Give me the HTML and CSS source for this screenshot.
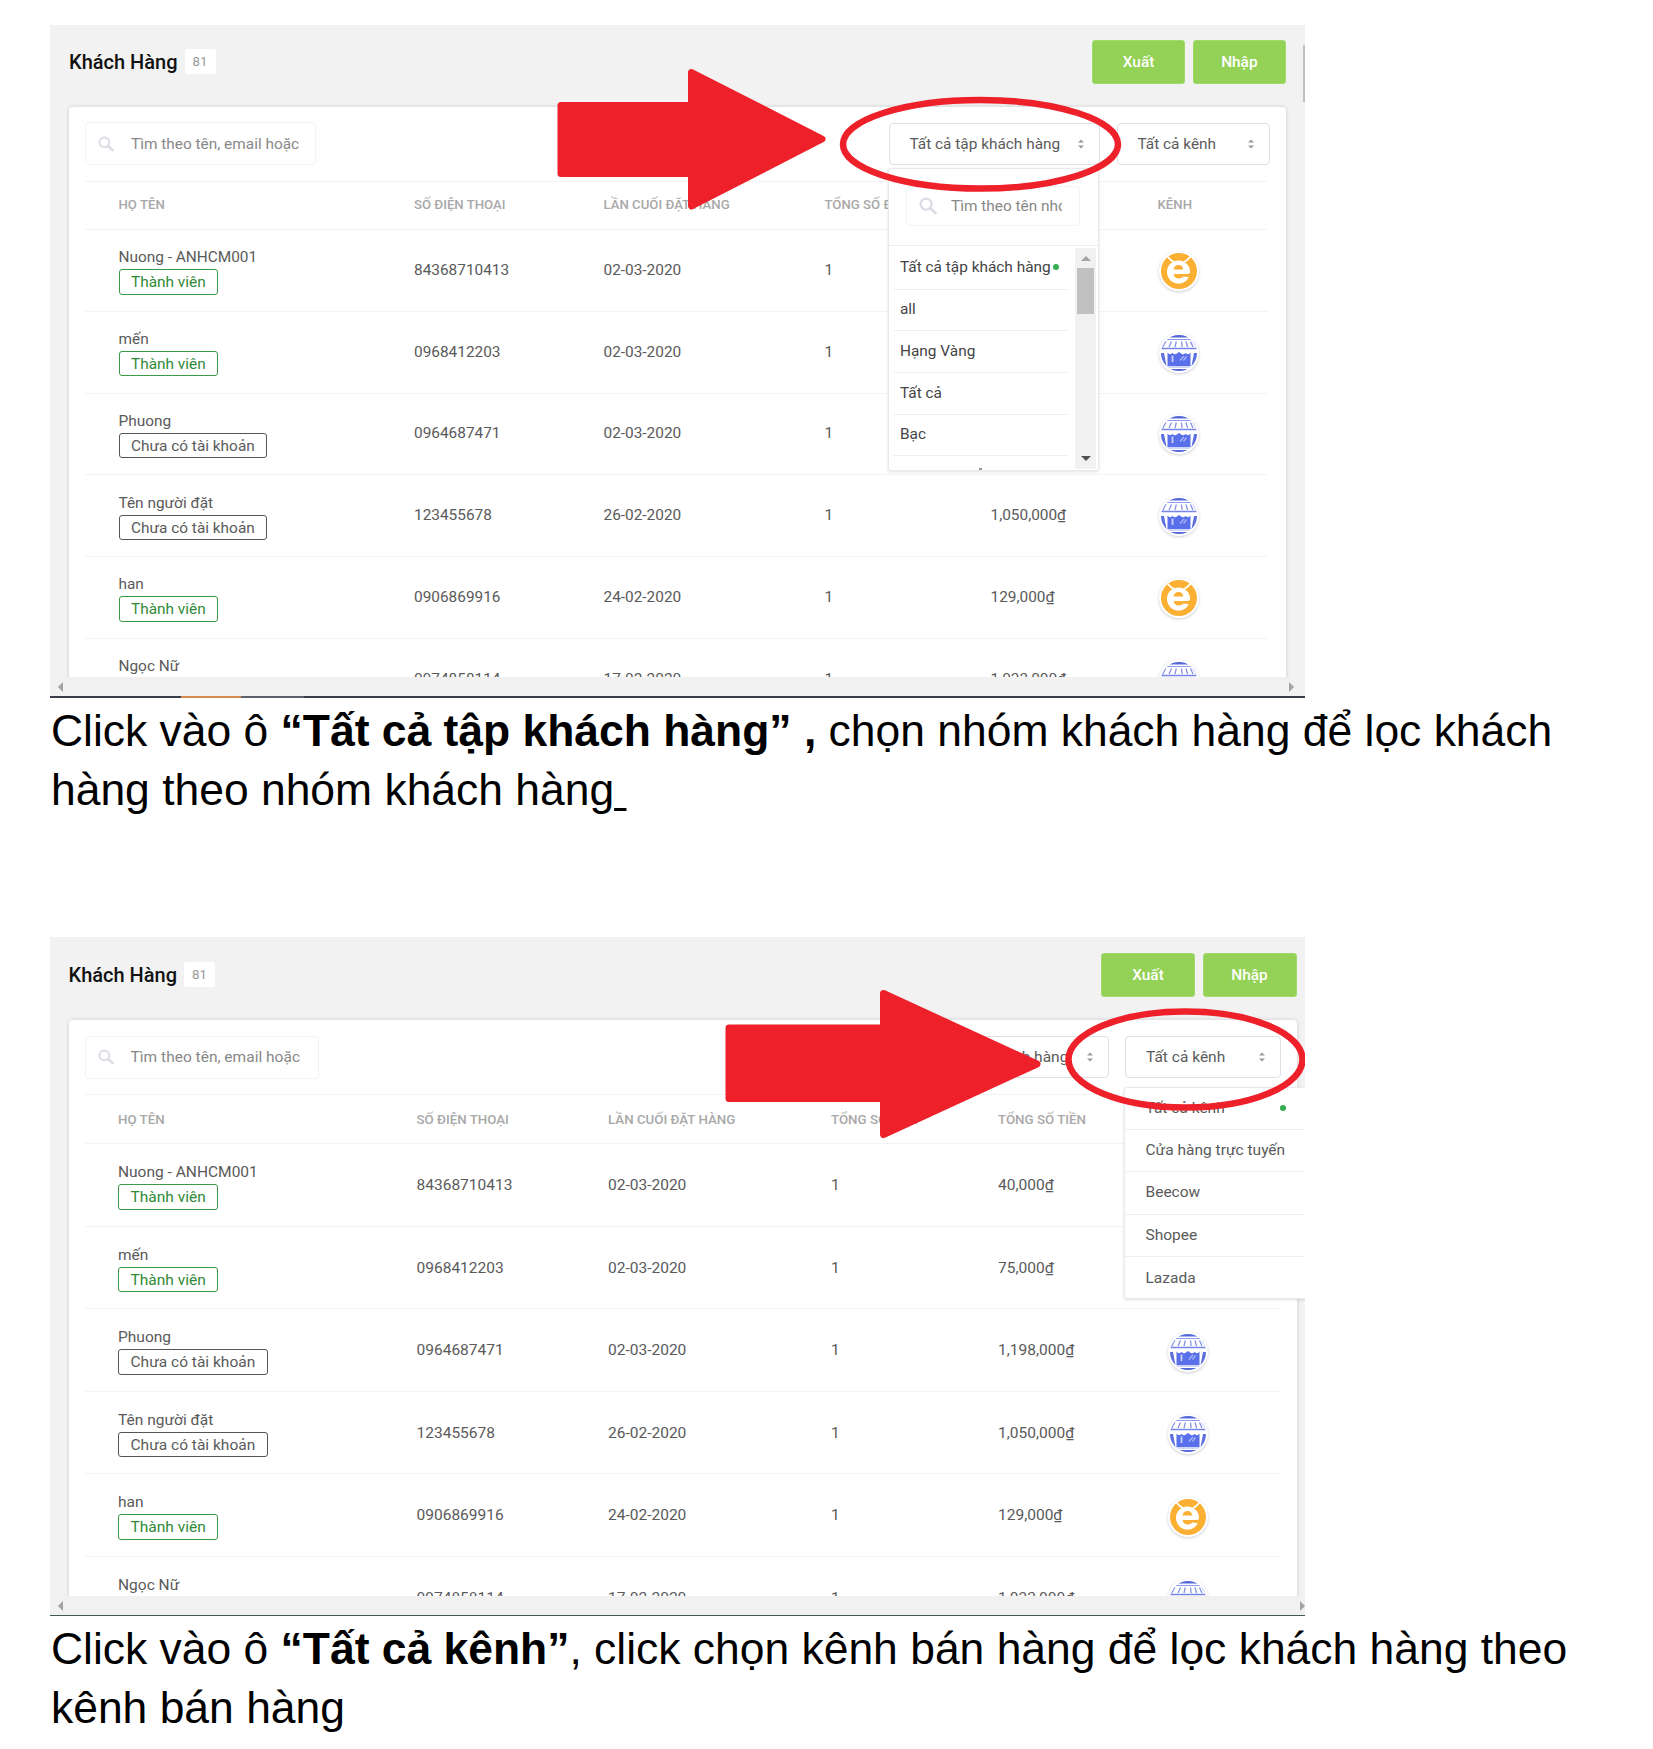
FILE: index.html
```html
<!DOCTYPE html>
<html lang="vi">
<head>
<meta charset="utf-8">
<title>Khách Hàng</title>
<link rel="stylesheet" href="styles.css">
</head>
<body>
<svg class="defs" aria-hidden="true">
  <defs>
    <clipPath id="disc"><circle cx="20" cy="20" r="18"/></clipPath>
    <symbol id="search" viewBox="0 0 16 16"><circle cx="6.3" cy="6.3" r="4.9" fill="none" stroke="currentColor" stroke-width="2"/><path d="M10 10l4.6 4.2" stroke="currentColor" stroke-width="2.5" stroke-linecap="round"/></symbol>
    <symbol id="sort" viewBox="0 0 8 12"><path d="M4 1.500L7 4.500H1zM4 10.500L1 7.500h6z" fill="#999"/></symbol>
    <symbol id="bee" viewBox="0 0 40 40">
      <circle cx="20" cy="20" r="18" fill="#fbb033"/>
      <path d="M8.500 5.500q3 4 6.500 5.500M31.500 5.500q-3 4-6.500 5.500" fill="none" stroke="#fff" stroke-width="1.800"/>
      <circle cx="19.500" cy="21" r="11.500" fill="#fff"/>
      <path d="M14.500 18.500q.8-4.500 5-4.500t4.800 4.500z" fill="#fbb033"/>
      <path d="M14.500 22.500h18v4l-8-1q-2 2-4.800 2-4.500 0-5.200-5z" fill="#fbb033"/>
      <path d="M14.500 22.300h15" stroke="#fff" stroke-width="1.500"/>
    </symbol>
    <symbol id="store" viewBox="0 0 40 40">
      <g clip-path="url(#disc)">
        <rect width="40" height="40" fill="#fff"/>
        <path d="M0 0h40v4.500H0zM9 36h22v4H9z" fill="#5468d8"/>
        <path d="M4 6.500h32" stroke="#8e9bea" stroke-width="1"/>
        <path d="M7 8L3.500 14.500M12.500 8.500l-2.500 5.500M17.300 8.500l-1.300 5.500M22.500 8.500l.6 5.500M27 8.500l1.600 5.500M31.500 8.500l2.500 5.500M34 8l4 6.500" stroke="#8491e8" stroke-width="1.300"/>
        <path d="M1 15.500h38" stroke="#7685e6" stroke-width="1.400"/>
        <path d="M1 20h4l2.500 13H5L1 27zM39 20h-4l-2.500 13H35l4-6.500z" fill="#5d70df"/>
        <path d="M8.500 19.500q2.200 3 5 .5 2.500 2.500 5 0l1.500-1 1.500 1q2.500 2.500 5 0 2.800 2.500 5-.5V33h-23z" fill="#5970ea"/>
        <path d="M13.500 22.500v6.500" stroke="#c9d0fa" stroke-width="1.800"/>
        <path d="M21 27.500l4-4.500M24.500 27.500l3-4" stroke="#a9b4f6" stroke-width="1.300"/>
        <path d="M7 34h26" stroke="#a3adf0" stroke-width="1"/>
      </g>
    </symbol>
  </defs>
</svg>

<main class="guide">
  <section class="shot shot-group">
    <div class="screen">
      <header class="topbar">
        <h1>Khách Hàng</h1><span class="count">81</span>
        <div class="actions"><button>Xuất</button><button>Nhập</button></div>
      </header>
      <div class="card">
        <div class="toolbar">
          <div class="search"><svg><use href="#search"/></svg><span>Tìm theo tên, email hoặc</span></div>
          <div class="select select-group"><span>Tất cả tập khách hàng</span><svg><use href="#sort"/></svg></div>
          <div class="select select-channel"><span>Tất cả kênh</span><svg><use href="#sort"/></svg></div>
        </div>
        <div class="row head"><span>HỌ TÊN</span><span>SỐ ĐIỆN THOẠI</span><span>LẦN CUỐI ĐẶT HÀNG</span><span>TỔNG SỐ ĐƠN</span><span>TỔNG SỐ TIỀN</span><span>KÊNH</span></div>
        <div class="row"><div class="who">Nuong - ANHCM001<b class="tag member">Thành viên</b></div><span>84368710413</span><span>02-03-2020</span><span>1</span><span>40,000₫</span><svg class="channel"><use href="#bee"/></svg></div>
        <div class="row"><div class="who">mến<b class="tag member">Thành viên</b></div><span>0968412203</span><span>02-03-2020</span><span>1</span><span>75,000₫</span><svg class="channel"><use href="#store"/></svg></div>
        <div class="row"><div class="who">Phuong<b class="tag">Chưa có tài khoản</b></div><span>0964687471</span><span>02-03-2020</span><span>1</span><span>1,198,000₫</span><svg class="channel"><use href="#store"/></svg></div>
        <div class="row"><div class="who">Tên người đặt<b class="tag">Chưa có tài khoản</b></div><span>123455678</span><span>26-02-2020</span><span>1</span><span>1,050,000₫</span><svg class="channel"><use href="#store"/></svg></div>
        <div class="row"><div class="who">han<b class="tag member">Thành viên</b></div><span>0906869916</span><span>24-02-2020</span><span>1</span><span>129,000₫</span><svg class="channel"><use href="#bee"/></svg></div>
        <div class="row"><div class="who">Ngọc Nữ<b class="tag member">Thành viên</b></div><span>0974858114</span><span>17-02-2020</span><span>1</span><span>1,033,000₫</span><svg class="channel"><use href="#store"/></svg></div>
      </div>
    </div>
    <div class="hscroll"><i class="left"></i><i class="right"></i></div>
    <div class="taskbar"><i class="orange"></i><i class="grey"></i></div>
    <i class="vthumb"></i>
    <div class="menu menu-group">
      <div class="menu-search"><div class="search"><svg><use href="#search"/></svg><span>Tìm theo tên nhóm</span></div></div>
      <div class="menu-body">
        <ul>
          <li>Tất cả tập khách hàng<i class="dot"></i></li>
          <li>all</li>
          <li>Hạng Vàng</li>
          <li>Tất cả</li>
          <li>Bạc</li>
          <li class="peek"><i></i></li>
        </ul>
        <div class="vscroll"><i class="up"></i><i class="thumb"></i><i class="down"></i></div>
      </div>
    </div>
    <svg class="marks" viewBox="0 0 1255 673">
      <path d="M511 80.500H641.500V47.500L772 114 641.500 181V148.500H511Z" class="arrow"/>
      <ellipse cx="930.500" cy="119.300" rx="137.500" ry="44.300" class="ring"/>
    </svg>
  </section>

  <p class="note">Click vào ô <strong>“Tất cả tập khách hàng” ,</strong> chọn nhóm khách hàng để lọc khách<br>hàng theo nhóm khách hàng<u>&nbsp;</u></p>

  <section class="shot shot-channel">
    <div class="screen">
      <header class="topbar">
        <h1>Khách Hàng</h1><span class="count">81</span>
        <div class="actions"><button>Xuất</button><button>Nhập</button></div>
      </header>
      <div class="card">
        <div class="toolbar">
          <div class="search"><svg><use href="#search"/></svg><span>Tìm theo tên, email hoặc</span></div>
          <div class="select select-group"><span>Tất cả tập khách hàng</span><svg><use href="#sort"/></svg></div>
          <div class="select select-channel"><span>Tất cả kênh</span><svg><use href="#sort"/></svg></div>
        </div>
        <div class="row head"><span>HỌ TÊN</span><span>SỐ ĐIỆN THOẠI</span><span>LẦN CUỐI ĐẶT HÀNG</span><span>TỔNG SỐ ĐƠN</span><span>TỔNG SỐ TIỀN</span><span>KÊNH</span></div>
        <div class="row"><div class="who">Nuong - ANHCM001<b class="tag member">Thành viên</b></div><span>84368710413</span><span>02-03-2020</span><span>1</span><span>40,000₫</span><svg class="channel"><use href="#bee"/></svg></div>
        <div class="row"><div class="who">mến<b class="tag member">Thành viên</b></div><span>0968412203</span><span>02-03-2020</span><span>1</span><span>75,000₫</span><svg class="channel"><use href="#store"/></svg></div>
        <div class="row"><div class="who">Phuong<b class="tag">Chưa có tài khoản</b></div><span>0964687471</span><span>02-03-2020</span><span>1</span><span>1,198,000₫</span><svg class="channel"><use href="#store"/></svg></div>
        <div class="row"><div class="who">Tên người đặt<b class="tag">Chưa có tài khoản</b></div><span>123455678</span><span>26-02-2020</span><span>1</span><span>1,050,000₫</span><svg class="channel"><use href="#store"/></svg></div>
        <div class="row"><div class="who">han<b class="tag member">Thành viên</b></div><span>0906869916</span><span>24-02-2020</span><span>1</span><span>129,000₫</span><svg class="channel"><use href="#bee"/></svg></div>
        <div class="row"><div class="who">Ngọc Nữ<b class="tag member">Thành viên</b></div><span>0974858114</span><span>17-02-2020</span><span>1</span><span>1,033,000₫</span><svg class="channel"><use href="#store"/></svg></div>
      </div>
    </div>
    <div class="hscroll"><i class="left"></i><i class="right"></i></div>
    <div class="taskbar"></div>
    <ul class="menu menu-channel">
      <li>Tất cả kênh<i class="dot"></i></li>
      <li>Cửa hàng trực tuyến</li>
      <li>Beecow</li>
      <li>Shopee</li>
      <li>Lazada</li>
    </ul>
    <svg class="marks" viewBox="0 0 1255 679">
      <path d="M679 91H833.500V56.500L987 127 833.500 197.500V161.500H679Z" class="arrow"/>
      <ellipse cx="1135.500" cy="122.500" rx="117" ry="48" class="ring"/>
    </svg>
  </section>

  <p class="note">Click vào ô <strong>“Tất cả kênh”</strong>, click chọn kênh bán hàng để lọc khách hàng theo<br>kênh bán hàng</p>
</main>
</body>
</html>
```
FILE: styles.css
```css
* { box-sizing: border-box; }
body { margin: 0; background: #fff; overflow: hidden; }
ul { list-style: none; margin: 0; padding: 0; }
i { font-style: normal; }
.defs { position: absolute; width: 0; height: 0; }

.guide { width: 1653px; height: 1749px; padding: 25px 0 0 50px; overflow: hidden; }

.shot {
  position: relative;
  display: flex;
  flex-direction: column;
  width: 1255px;
  overflow: hidden;
  background: #f2f2f2;
  font-family: Roboto, sans-serif;
  font-size: var(--fs);
  color: #5a5a5a;
}
.shot-group {
  --fs: 15.4px; --bar: 81.500px; --card: 1217px; --left: 19px; --search: 231px;
  --group: 211.500px; --channel: 153.500px; --line: 1183px;
  --head: 48.500px; --head-fs: 13.200px; --row: 81.800px; --button: 93.300px;
  --cols: 295.500px 189.500px 221px 166px 167px 1fr;
  height: 673px;
}
.shot-channel {
  --fs: 15.520px; --bar: 83px; --card: 1228px; --left: 18.500px; --search: 234px;
  --group: 213px; --channel: 155.500px; --line: 1195px;
  --head: 49px; --head-fs: 13.320px; --row: 82.550px; --button: 94px;
  --cols: 298.500px 191.500px 223px 167px 169px 1fr;
  height: 679px;
}

.screen { flex: 1; min-height: 0; overflow: hidden; padding-left: var(--left); }
.topbar { display: flex; align-items: center; width: var(--card); height: var(--bar); padding-bottom: 8px; }
.shot-channel .topbar { padding-bottom: 7.500px; }
h1 { margin: 0; font-size: 20px; font-weight: 500; color: #111; white-space: nowrap; }
.count {
  display: flex; align-items: center; justify-content: center;
  width: 31px; height: 25px; margin-left: 7px;
  border-radius: 3px; background: #fff; color: #999; font-size: 13.200px;
}
.actions { display: flex; gap: 7.500px; margin-left: auto; }
.actions button {
  width: var(--button); height: 43.500px; padding: 0;
  border: 1px solid #9fda6a; border-radius: 3px;
  background: #94d157; color: #fff; font: 500 15.400px Roboto, sans-serif;
}
.card {
  width: var(--card); height: 640px; padding: 16px 16px 0;
  border-radius: 4px; background: #fff; box-shadow: 0 0 4px rgba(0, 0, 0, .16);
}
.toolbar { display: flex; align-items: center; height: 58px; padding-bottom: 15.500px; }
.search {
  display: flex; align-items: center; gap: 17px;
  width: var(--search); height: 43px; padding-left: 12px;
  border: 1px solid #f3f3f5; border-radius: 4px; color: #888; white-space: nowrap;
}
.search svg { width: 16px; height: 16px; flex: none; color: #dcdce6; }
.select {
  display: flex; align-items: center; justify-content: space-between;
  width: var(--channel); height: 42px; padding: 0 14px 0 20px;
  border: 1px solid #e0e0e4; border-radius: 4px; white-space: nowrap;
}
.select svg { width: 8px; height: 12px; }
.select-group { width: var(--group); margin-left: auto; margin-right: 16.500px; }

.row {
  display: grid; grid-template-columns: var(--cols); align-items: center;
  width: var(--line); height: var(--row); padding-left: 33.500px;
  border-top: 1px solid #f3f3f3; white-space: nowrap;
}
.row > span { margin-top: -1px; }
.shot-channel .row { padding-top: .5px; }
.shot-channel .row > span { margin-top: 0; }
.head { height: var(--head); color: #a8a8a8; font-size: var(--head-fs); font-weight: 500; }
.who { display: flex; flex-direction: column; align-items: flex-start; line-height: 23px; }
.shot-channel .who { margin-top: 1px; }
.tag {
  height: 25.500px; padding: 0 11.500px; border: 1px solid #555; border-radius: 3px;
  font-weight: 400; line-height: 24px;
}
.member { border-color: #3a9a48; color: #2f8a35; }
.channel {
  width: 40px; height: 40px; margin: 1px 0 0 1px; border-radius: 50%;
  background: #fff; box-shadow: 0 1px 3px rgba(60, 60, 90, .25);
}
.shot-channel .channel { margin-top: 3px; }

.hscroll { display: flex; align-items: center; justify-content: space-between; height: 19px; padding: 0 11px 0 8px; background: #f1f1f1; }
.shot-channel .hscroll { padding-right: 0; }
.left, .right { border: 5px solid transparent; }
.left { border-left: 0; border-right-color: #a3a3a3; }
.right { border-right: 0; border-left-color: #a3a3a3; }
.taskbar { display: flex; height: 2px; padding-left: 131px; background: #3a3d4a; }
.shot-channel .taskbar { height: 1px; background: #44585a; }
.orange { width: 60px; background: #d88a4c; }
.grey { width: 63px; background: #5c606a; }
.vthumb { position: absolute; right: 0; top: 20px; width: 2px; height: 57px; background: #c1c1c1; }

.menu {
  position: absolute; border: 1px solid #e9e9eb; border-radius: 3px;
  background: #fff; box-shadow: 0 1px 3px rgba(0, 0, 0, .12); white-space: nowrap;
}
.menu-group { left: 838px; top: 143px; width: 211px; height: 303px; color: #444; }
.menu-search { height: 77px; padding: 17px 17px 0; border-bottom: 1px solid #ececec; }
.menu-search .search { width: 174px; height: 40px; gap: 14px; overflow: hidden; }
.menu-search .search svg { width: 18px; height: 18px; }
.menu-search .search span { width: 111px; overflow: hidden; }
.menu-body { display: flex; justify-content: space-between; height: 224px; overflow: hidden; padding: 0 2px 0 4px; }
.menu-body ul { width: 175px; }
.menu-body li { display: flex; align-items: center; height: 41.700px; padding: 0 0 1px 7px; border-bottom: 1px solid #f0f0f0; }
.menu-body li:first-child { height: 43.500px; padding-bottom: 0; }
.dot { width: 6px; height: 6px; margin-left: 2px; border-radius: 50%; background: #35ad50; }
.menu-body .peek { align-items: flex-start; }
.peek i { width: 3px; height: 2px; margin: 12px 0 0 79px; background: #999; }
.vscroll { display: flex; flex-direction: column; align-items: center; width: 21px; height: 221px; margin-top: 2px; background: #f1f1f1; }
.up, .down { border: 5px solid transparent; }
.up { margin-top: 3px; border-bottom-color: #a3a3a3; }
.thumb { width: 17px; height: 46px; margin-top: 7px; background: #c1c1c1; }
.down { margin: auto 0 3px; border-top-color: #505050; }

.menu-channel { left: 1074px; top: 150px; width: 210px; height: 212px; }
.menu-channel li { display: flex; align-items: center; height: 42.500px; padding: 0 0 1px 20.500px; border-bottom: 1px solid #f0f0f0; }
.menu-channel li:first-child { height: 41.500px; }
.menu-channel li:last-child { border: 0; }
.menu-channel .dot { margin-left: 55px; }

.marks { position: absolute; inset: 0; width: 100%; height: 100%; }
.arrow { fill: #ee212a; stroke: #ee212a; stroke-width: 7px; stroke-linejoin: round; }
.ring { fill: none; stroke: #ee212a; stroke-width: 6.500px; }

.note {
  height: 239px; margin: 0; padding: 2.500px 0 0 1px;
  color: #000; font-family: "Liberation Sans", Arial, sans-serif; font-size: 44.430px; line-height: 59px; white-space: nowrap;
}
.note u { text-decoration-thickness: 3px; text-underline-offset: 3px; }
```
